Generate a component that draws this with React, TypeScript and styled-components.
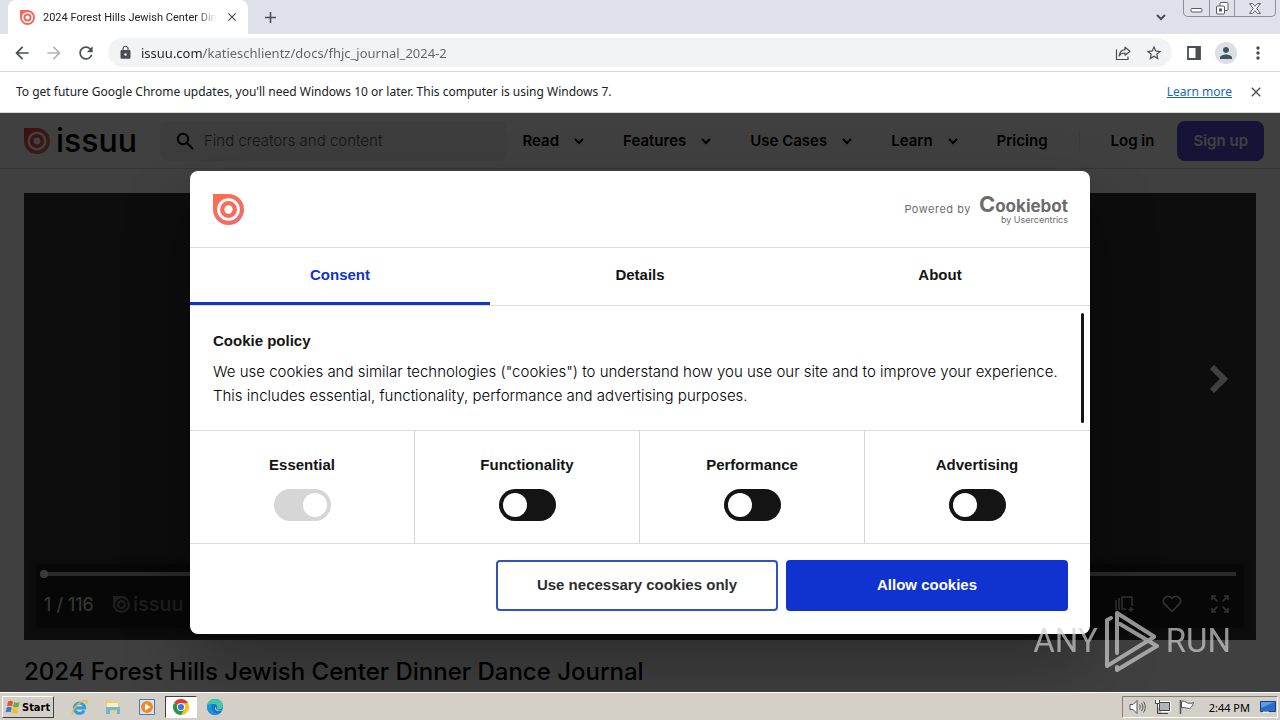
import React from "react";
import styled, { createGlobalStyle } from "styled-components";
import {
  MdAdd,
  MdArrowBack,
  MdArrowForward,
  MdClose,
  MdLock,
  MdMoreVert,
  MdPerson,
  MdRefresh,
  MdStarBorder,
} from "react-icons/md";

const uiFont = `"Noto Sans", "Open Sans", sans-serif`;
const siteFont = `Inter, "Liberation Sans", sans-serif`;
const dialogFont = `"Liberation Sans", Arial, sans-serif`;

const GlobalStyle = createGlobalStyle`
  * { box-sizing: border-box; }
  body { margin: 0; }
  button, input { font: inherit; color: inherit; margin: 0; }
  button { padding: 0; border: 0; background: none; cursor: pointer; }
  a { text-decoration: none; color: inherit; }
  h1, h2, p { margin: 0; }
  svg { display: block; flex: none; }
`;

const Screen = styled.div`
  display: flex;
  flex-direction: column;
  height: 100vh;
  overflow: hidden;
  font-family: ${uiFont};
  font-size: 12px;
  color: #202124;
`;

/* Browser chrome */

const TabStrip = styled.div`
  display: flex;
  align-items: center;
  height: 34px;
  flex: none;
  padding: 0 4px 0 8px;
  background: #dee1e9;
`;

const BrowserTab = styled.div`
  display: flex;
  align-items: center;
  align-self: stretch;
  width: 240px;
  padding: 0 9px 0 12px;
  gap: 8px;
  border-radius: 8px 8px 0 0;
  background: #fff;
`;

const TabTitle = styled.span`
  flex: 1;
  min-width: 0;
  overflow: hidden;
  white-space: nowrap;
  font-family: Roboto, ${uiFont};
  font-size: 11px;
  mask-image: linear-gradient(90deg, #000 88%, transparent);
`;

const IconButton = styled.button<{ $size?: number; $tint?: string }>`
  display: flex;
  align-items: center;
  justify-content: center;
  flex: none;
  width: ${(p) => p.$size ?? 20}px;
  height: ${(p) => p.$size ?? 20}px;
  color: ${(p) => p.$tint ?? "#4a4d51"};
`;

const NewTab = styled(IconButton)`
  margin-left: 12px;
`;

const TabSearch = styled(IconButton)`
  margin-left: auto;
  margin-right: 12px;
`;

const WindowControls = styled.div`
  display: flex;
  align-self: flex-start;
  height: 17px;
  border: 1px solid #8b8e96;
  border-top: 0;
  border-radius: 0 0 5px 5px;
`;

const WindowButton = styled.button<{ $wide?: boolean }>`
  display: flex;
  align-items: center;
  justify-content: center;
  width: ${(p) => (p.$wide ? 41 : 25)}px;
  & + & {
    border-left: 1px solid #8b8e96;
  }
`;

const Toolbar = styled.div`
  display: flex;
  align-items: center;
  height: 38px;
  flex: none;
  padding: 0 12px;
  gap: 12px;
  border-bottom: 1px solid #d5d7da;
  background: #fff;
`;

const Omnibox = styled.form`
  display: flex;
  align-items: center;
  flex: 1;
  height: 29px;
  padding: 0 8px 0 10px;
  gap: 8px;
  border-radius: 15px;
  background: #f1f3f4;
`;

const Address = styled.input`
  flex: 1;
  min-width: 0;
  padding: 0;
  border: 0;
  outline: 0;
  font-size: 13px;
  background: linear-gradient(90deg, #202124 61px, #5f6368 61px);
  background-clip: text;
  color: transparent;
`;

const Extras = styled.div`
  display: flex;
  align-items: center;
  gap: 11px;
`;

const Avatar = styled(IconButton)`
  border-radius: 50%;
  background: #dcdfe4;
`;

const InfoBar = styled.div`
  display: flex;
  align-items: center;
  height: 41px;
  flex: none;
  padding: 0 14px 1px 16px;
  gap: 14px;
  border-bottom: 1px solid #d5d9d7;
  background: #fff;
`;

const InfoText = styled.p`
  flex: 1;
`;

const InfoLink = styled.a`
  color: #1a66c4;
  text-decoration: underline;
`;

/* Web page */

const Viewport = styled.main`
  position: relative;
  flex: 1;
  min-height: 0;
  overflow: hidden;
  background: #fff;
  font-family: ${siteFont};
`;

const SiteHeader = styled.header`
  display: flex;
  align-items: center;
  height: 56px;
  padding: 0 16px 0 24px;
  border-bottom: 1px solid #d8d8d8;
  font-size: 15px;
  font-weight: 600;
  color: #000;
`;

const Brand = styled.a`
  display: flex;
  align-items: center;
  width: 136px;
  gap: 6px;
`;

const BrandName = styled.span<{ $size: number }>`
  font-size: ${(p) => p.$size}px;
  line-height: 28px;
  font-weight: 500;
`;

const SiteSearch = styled.form`
  display: flex;
  align-items: center;
  flex: 1;
  height: 40px;
  padding: 0 16px;
  gap: 10px;
  border-radius: 8px;
  background: #f2f2f2;
`;

const SearchInput = styled.input`
  flex: 1;
  min-width: 0;
  padding: 0;
  border: 0;
  outline: 0;
  background: none;
  font-weight: 300;
  &::placeholder {
    color: #5c5c5c;
    opacity: 1;
  }
`;

const SiteNav = styled.nav`
  display: flex;
  align-items: center;
  gap: 38px;
  padding: 0 31px 0 16px;
  border-right: 1px solid #ececec;
`;

const NavItem = styled.button`
  display: flex;
  align-items: center;
  gap: 14px;
`;

const LogIn = styled.a`
  padding: 0 23px 0 31px;
`;

const SignUp = styled.button`
  height: 40px;
  padding: 0 16px;
  border-radius: 8px;
  background: #5b4bd8;
  color: #fff;
`;

const Reader = styled.section`
  display: flex;
  flex-direction: column;
  height: 447px;
  margin: 24px 24px 0;
  padding: 12px;
  background: #343434;
`;

const Stage = styled.div`
  display: flex;
  align-items: center;
  justify-content: flex-end;
  flex: 1;
  padding: 0 13px 12px 0;
  color: #fff;
`;

const Controls = styled.div`
  height: 64px;
  padding: 0 8px;
  border-radius: 4px;
  background: #1c1c1c;
  box-shadow: 0 0 8px #1c1c1c;
`;

const Seek = styled.input`
  display: block;
  width: calc(100% + 8px);
  height: 20px;
  margin-left: -4px;
  appearance: none;
  background: linear-gradient(#a8a8a8, #a8a8a8) center / calc(100% - 8px) 4px no-repeat;
  &::-webkit-slider-thumb {
    appearance: none;
    width: 8px;
    height: 8px;
    border-radius: 50%;
    background: #e8e8e8;
  }
`;

const ControlRow = styled.div`
  display: flex;
  align-items: center;
  height: 40px;
  color: #e0e0e0;
`;

const PageCount = styled.span`
  width: 69px;
  font-size: 18px;
`;

const ReaderBrand = styled.div`
  display: flex;
  align-items: center;
  gap: 3px;
  flex: 1;
  color: #7a7a7a;
`;

const ReaderActions = styled.div`
  display: flex;
  gap: 24px;
  padding-right: 4px;
`;

const DocTitle = styled.h1`
  margin: 16px 24px 0;
  font-size: 24px;
  line-height: 32px;
  font-weight: 500;
  color: #000;
`;

/* Consent dialog */

const Backdrop = styled.div`
  position: absolute;
  inset: 0;
  display: flex;
  align-items: center;
  justify-content: center;
  background: rgba(0, 0, 0, 0.75);
`;

const Dialog = styled.section`
  width: 900px;
  max-width: 95%;
  border-radius: 8px;
  background: #fff;
  box-shadow: 0 32px 68px rgba(0, 0, 0, 0.3);
  font-family: ${dialogFont};
  font-size: 15px;
  color: #141414;
`;

const DialogHeader = styled.header`
  display: flex;
  align-items: center;
  justify-content: space-between;
  height: 77px;
  padding: 0 22px 0 23px;
  border-bottom: 1px solid #dcdcdc;
`;

const PoweredBy = styled.a`
  display: flex;
  align-items: center;
  gap: 8px;
  font-family: ${siteFont};
  font-size: 11px;
  letter-spacing: 0.5px;
  color: #6c6c6c;
`;

const Cookiebot = styled.span`
  display: flex;
  flex-direction: column;
  align-items: flex-end;
  letter-spacing: normal;
`;

const CookiebotName = styled.div`
  display: flex;
  align-items: baseline;
  font-size: 17px;
  line-height: 18px;
  font-weight: 700;
`;

const CookiebotInitial = styled.span`
  font-size: 22px;
  line-height: 18px;
`;

const CookiebotBy = styled.span`
  font-size: 9px;
  line-height: 9px;
`;

const TabRow = styled.div`
  display: grid;
  grid-template-columns: repeat(3, 1fr);
  height: 58px;
  border-bottom: 1px solid #dcdcdc;
`;

const DialogTab = styled.button<{ $active?: boolean }>`
  padding-bottom: 2px;
  border-bottom: 3px solid ${(p) => (p.$active ? "#1032cf" : "transparent")};
  font-weight: 700;
  color: ${(p) => (p.$active ? "#1032cf" : "#141414")};
`;

const PolicyPane = styled.div`
  display: flex;
  justify-content: space-between;
  height: 125px;
  padding: 7px 6px 7px 23px;
  border-bottom: 1px solid #dcdcdc;
`;

const PolicyText = styled.div`
  padding-top: 16px;
  line-height: 24px;
`;

const PolicyTitle = styled.h2`
  margin-bottom: 7px;
  font-size: 15px;
  line-height: 24px;
`;

const PolicyBody = styled.p`
  font-family: ${siteFont};
  font-weight: 300;
  color: #000;
`;

const ScrollThumb = styled.div`
  width: 3px;
  flex: none;
  border-radius: 2px;
  background: #141414;
`;

const Choices = styled.div`
  display: grid;
  grid-template-columns: repeat(4, 1fr);
  height: 113px;
  border-bottom: 1px solid #dcdcdc;
`;

const Choice = styled.label`
  display: flex;
  flex-direction: column;
  align-items: center;
  padding-top: 22px;
  gap: 12px;
  line-height: 24px;
  font-weight: 700;
  border-right: 1px solid #d6d6d6;
  &:last-child {
    border-right-color: transparent;
  }
`;

const Toggle = styled.input`
  appearance: none;
  display: flex;
  align-items: center;
  width: 57px;
  height: 32px;
  padding: 0 4px;
  border-radius: 16px;
  background: #141414;
  &::before {
    content: "";
    width: 24px;
    height: 24px;
    border-radius: 50%;
    background: #fff;
  }
  &:checked {
    justify-content: flex-end;
  }
  &:disabled {
    background: #d6d6d6;
  }
`;

const DialogFooter = styled.footer`
  display: flex;
  justify-content: flex-end;
  gap: 8px;
  height: 90px;
  padding: 16px 22px 23px;
`;

const ConsentButton = styled.button<{ $primary?: boolean }>`
  width: 282px;
  padding-bottom: 2px;
  border: 2px solid ${(p) => (p.$primary ? "#1032cf" : "#3450c8")};
  border-radius: 4px;
  background: ${(p) => (p.$primary ? "#1032cf" : "#fff")};
  color: ${(p) => (p.$primary ? "#fff" : "#2e2e2e")};
  font-weight: 700;
`;

/* Watermark over the recording */

const Watermark = styled.div`
  position: fixed;
  right: 49px;
  bottom: 47px;
  display: flex;
  align-items: center;
  gap: 5px;
  font-family: Roboto, sans-serif;
  font-size: 33px;
  line-height: 64px;
  color: #d0d0d0;
  opacity: 0.7;
  pointer-events: none;
`;

/* Taskbar */

const Taskbar = styled.footer`
  display: flex;
  align-items: center;
  height: 28px;
  flex: none;
  padding: 1px 2px 0;
  border-top: 1px solid #fff;
  background: #d4d0c8;
  color: #000;
`;

const StartButton = styled.button`
  display: flex;
  align-items: center;
  height: 22px;
  width: 52px;
  padding: 0 2px;
  gap: 1px;
  border: 1px solid;
  border-color: #fff #404040 #404040 #fff;
  font-family: "DejaVu Sans Condensed", ${uiFont};
  font-size: 11px;
  font-weight: 700;
`;

const Pinned = styled.div`
  display: flex;
  flex: 1;
  gap: 2px;
  padding-left: 9px;
`;

const PinnedApp = styled.button<{ $active?: boolean }>`
  display: flex;
  align-items: center;
  justify-content: center;
  width: 32px;
  height: 22px;
  border: 1px solid;
  border-color: ${(p) => (p.$active ? "#404040 #fff #fff #404040" : "transparent")};
  background: ${(p) => (p.$active ? "#fff" : "none")};
`;

const Tray = styled.div`
  display: flex;
  align-items: center;
  height: 22px;
  padding: 0 1px 0 6px;
  gap: 8px;
  border: 1px solid;
  border-color: #808080 #fff #fff #808080;
`;

const Clock = styled.time`
  padding: 0 2px 0 6px;
  font-size: 11px;
`;

/* Drawings */

function IssuuMark({ size, from, to, hole = "#fff" }: { size: number; from: string; to: string; hole?: string }) {
  const id = `mark-${size}-${from.slice(1)}`;
  return (
    <svg width={size} height={size} viewBox="0 0 30 30" aria-hidden="true">
      <defs>
        <linearGradient id={id} x1="0" y1="0" x2="1" y2="1">
          <stop offset="0" stopColor={from} />
          <stop offset="1" stopColor={to} />
        </linearGradient>
      </defs>
      <path d="M0 0h15a15 15 0 1 1-15 15z" fill={`url(#${id})`} />
      <circle cx="15" cy="15" r="9.6" fill="none" stroke={hole} strokeWidth="2.8" />
      <circle cx="15" cy="15" r="4" fill={hole} />
    </svg>
  );
}

const NavChevron = () => (
  <svg width="12" height="8" viewBox="0 0 12 8" fill="none" stroke="currentColor" strokeWidth="2">
    <path d="M2 2l4 4 4-4" />
  </svg>
);

const ShareIcon = () => (
  <svg width="16" height="16" viewBox="0 0 16 16" fill="none" stroke="currentColor" strokeWidth="1.2">
    <path d="M1.5 4.5v10h11.5v-3" />
    <path d="M10 2.2 15 6.2l-5 4V8C7.5 8 5.5 8.8 4.2 11c.4-3.4 2.5-6 5.8-6.4z" strokeLinejoin="round" />
  </svg>
);

const SidePanelIcon = () => (
  <svg width="16" height="16" viewBox="0 0 16 16">
    <path d="M2 2h12v12H2z" fill="none" stroke="currentColor" strokeWidth="1.8" />
    <path d="M9.5 2H14v12H9.5z" fill="currentColor" />
  </svg>
);

const AddToStackIcon = () => (
  <svg width="20" height="20" viewBox="0 0 20 20" fill="none" stroke="currentColor" strokeWidth="1.5">
    <path d="M2 6v10M5 4v12M12 15H8V3h10v9M14.5 15.5h5M17 13v5" />
  </svg>
);

const HeartIcon = () => (
  <svg width="20" height="20" viewBox="0 0 24 24" fill="none" stroke="currentColor" strokeWidth="2">
    <path d="M12 21 3.3 12.2a5.5 5.5 0 0 1 7.8-7.8l.9.9.9-.9a5.5 5.5 0 0 1 7.8 7.8z" strokeLinejoin="round" />
  </svg>
);

const FullscreenIcon = () => (
  <svg width="20" height="20" viewBox="0 0 20 20" fill="none" stroke="currentColor" strokeWidth="1.6">
    <path d="M2 6V2h4M14 2h4v4M18 14v4h-4M6 18H2v-4M2.500 2.500l5 5M17.500 2.500l-5 5M17.500 17.500l-5-5M2.500 17.500l5-5" />
  </svg>
);

const WatermarkLogo = () => (
  <svg width="58" height="64" viewBox="0 0 58 64" fill="none" stroke="currentColor" strokeWidth="4" strokeLinejoin="round" strokeLinecap="round">
    <path d="M14 44V4l37 23.500" />
    <path d="M8 9 4 11v46l47-29" />
    <path d="M17 15 54 37 14 61v-3" />
  </svg>
);

const WindowsFlag = () => (
  <svg width="16" height="16" viewBox="0 0 16 16">
    <path d="M3 2.500c2-1 3.500-.8 5 0L7 7.300c-1.500-.8-3-.8-5 0z" fill="#e8542a" />
    <path d="M9 3c2 1 3.700.8 5.500 0l-1 4.800c-2 .8-3.500.8-5.500 0z" fill="#6fae2e" />
    <path d="M1.700 8.500c2-1 3.500-.8 5 0l-1 4.800c-1.500-.8-3-.8-5 0z" fill="#3a79d0" />
    <path d="M7.700 9c2 1 3.700.8 5.500 0l-1 4.800c-2 .8-3.500.8-5.500 0z" fill="#f5bd22" />
  </svg>
);

const ExplorerIcon = () => (
  <svg width="17" height="17" viewBox="0 0 17 17" fill="none">
    <path d="M13.200 11.500A5.200 5.200 0 1 1 13.700 9H5" stroke="#2f9fe0" strokeWidth="3" />
    <path d="M2 15.500C-1 12.500 9 1 15.500 1.500c1.200.4.700 2-.2 3.500" stroke="#e9b93b" strokeWidth="1.4" />
  </svg>
);

const FolderIcon = () => (
  <svg width="16" height="16" viewBox="0 0 16 16">
    <path d="M1 1h5l1 2h7v11H1z" fill="#e8cf72" />
    <path d="M2 4h11v4H2z" fill="#fbf1bd" />
    <path d="M1 8h14v7h-3v-4H5v4H1z" fill="#6cb7dd" />
  </svg>
);

const PlayerIcon = () => (
  <svg width="16" height="16" viewBox="0 0 16 16">
    <path d="M.5.5h15v15H.5z" fill="#d5e5f5" stroke="#4a78b0" />
    <circle cx="8" cy="8" r="6" fill="#f08a1c" />
    <path d="M6 4.500 11.500 8 6 11.500z" fill="#fff" />
  </svg>
);

const ChromeIcon = () => (
  <svg width="16" height="16" viewBox="0 0 16 16">
    <path d="M8 8 1.070 4A8 8 0 0 1 14.930 4z" fill="#e33b2e" />
    <path d="M8 8V4h6.930A8 8 0 0 1 8 16z" fill="#fbc116" />
    <path d="M8 8l3.460 2L8 16A8 8 0 0 1 1.070 4z" fill="#279847" />
    <path d="M4.500 4h10.430L8 4.400z" fill="#e33b2e" />
    <circle cx="8" cy="8" r="4" fill="#fff" />
    <circle cx="8" cy="8" r="3.100" fill="#3b78e7" />
  </svg>
);

const EdgeIcon = () => (
  <svg width="16" height="16" viewBox="0 0 16 16">
    <circle cx="8" cy="8" r="8" fill="#1376c8" />
    <path d="M.2 7C1 2.500 4.500 0 8.500 0 13 0 16 3.200 16 6.500c0 2.500-1.800 4-4 4-1.700 0-2.600-.8-2-1.600C10.800 7 9.500 5 6.500 5 3.500 5 1 6 .2 7z" fill="#43c7a8" />
    <path d="M.1 8C1 5.500 3.500 4.500 6 5 4 7 4.500 11 7 13c2 1.600 4.500 1.500 6.500.5C9 18.500.2 15.500.1 8z" fill="#1c93dc" />
    <path d="M8.500 7.500c-1.500 2.500.5 4.800 4 4.500 1.500-.1 2.500-.6 3-1.200-1 .5-2 .7-3.500.7-2 0-3.500-1.500-3.500-4z" fill="#d4d0c8" />
  </svg>
);

const SpeakerIcon = () => (
  <svg width="17" height="16" viewBox="0 0 17 16" fill="none" stroke="#555">
    <path d="M1 5.500h3l4-4v13l-4-4H1z" fill="#fff" />
    <path d="M10.500 5.500c1 1.500 1 3.500 0 5M12.500 4c2 2.500 2 5.500 0 8M14.500 2.500c2.300 3.500 2.300 7.500 0 11" />
  </svg>
);

const NetworkIcon = () => (
  <svg width="17" height="16" viewBox="0 0 17 16" fill="none" stroke="#444">
    <path d="M5.500 3.500h10v8h-10z" fill="#b9b9b9" stroke="#fff" strokeWidth="3" />
    <path d="M5.500 3.500h10v8h-10zM8 14.500h6M3.500 7v7.500H8" fill="#b4b4b4" />
    <path d="M1.500 1v3.500h4V1M3.500 4v4" fill="#fff" />
  </svg>
);

const FlagIcon = () => (
  <svg width="16" height="16" viewBox="0 0 16 16" stroke="#555">
    <path d="M2.500 2.500c2-1 4 0 6 1.500 2 .5 4 .5 6-.5-1 3-2 5-4 6-2 .5-4-2-8-.5z" fill="#fff" />
    <path d="M1.500 1v14" strokeWidth="1.6" />
  </svg>
);

const MonitorIcon = () => (
  <svg width="16" height="16" viewBox="0 0 16 16">
    <path d="M.5 2.500h15v10H.5z" fill="#2b6cc8" stroke="#173f85" />
    <path d="M1 3h14L1 9z" fill="#5f9be6" />
    <path d="M3 12.500h6v1.500H3z" fill="#eee" />
  </svg>
);

const navItems = ["Read", "Features", "Use Cases", "Learn"];

const choices = [
  { name: "Essential", locked: true },
  { name: "Functionality" },
  { name: "Performance" },
  { name: "Advertising" },
];

export default function App() {
  return (
    <Screen>
      <GlobalStyle />
      <TabStrip>
        <BrowserTab>
          <IssuuMark size={15} from="#f26a5c" to="#e66a62" />
          <TabTitle>2024 Forest Hills Jewish Center Dinner</TabTitle>
          <IconButton $size={14} aria-label="Close tab">
            <MdClose size={14} />
          </IconButton>
        </BrowserTab>
        <NewTab aria-label="New tab">
          <MdAdd size={19} />
        </NewTab>
        <TabSearch aria-label="Search tabs">
          <NavChevron />
        </TabSearch>
        <WindowControls>
          <WindowButton aria-label="Minimize">
            <svg width="13" height="16" viewBox="0 0 13 16">
              <rect x="1" y="8.5" width="11" height="3.5" rx="1" fill="#fff" stroke="#555b66" />
            </svg>
          </WindowButton>
          <WindowButton aria-label="Restore">
            <svg width="13" height="13" viewBox="0 0 13 13" fill="#fff" stroke="#555b66">
              <rect x="4" y=".5" width="8" height="8" rx="1" />
              <rect x=".5" y="4" width="8" height="8" rx="1" />
              <rect x="3.5" y="7" width="2" height="2" />
            </svg>
          </WindowButton>
          <WindowButton $wide aria-label="Close">
            <svg width="12" height="11" viewBox="0 0 12 11" fill="#fff" stroke="#555b66">
              <path d="M.6.6h3L6 3.400 8.400.6h3L7.800 5.500l3.600 4.900h-3L6 7.600l-2.400 2.800h-3l3.600-4.900z" strokeLinejoin="round" />
            </svg>
          </WindowButton>
        </WindowControls>
      </TabStrip>

      <Toolbar>
        <IconButton aria-label="Back">
          <MdArrowBack size={20} />
        </IconButton>
        <IconButton $tint="#b4b6b9" aria-label="Forward">
          <MdArrowForward size={20} />
        </IconButton>
        <IconButton aria-label="Reload">
          <MdRefresh size={20} />
        </IconButton>
        <Omnibox>
          <MdLock size={15} color="#4a4d51" />
          <Address aria-label="Address" defaultValue="issuu.com/katieschlientz/docs/fhjc_journal_2024-2" />
          <Extras>
            <IconButton type="button" aria-label="Share">
              <ShareIcon />
            </IconButton>
            <IconButton type="button" aria-label="Bookmark">
              <MdStarBorder size={18} />
            </IconButton>
          </Extras>
        </Omnibox>
        <Extras>
          <IconButton aria-label="Side panel">
            <SidePanelIcon />
          </IconButton>
          <Avatar $size={22} $tint="#45506a" aria-label="Profile">
            <MdPerson size={18} />
          </Avatar>
          <IconButton aria-label="Menu">
            <MdMoreVert size={20} />
          </IconButton>
        </Extras>
      </Toolbar>

      <InfoBar>
        <InfoText>
          To get future Google Chrome updates, you'll need Windows 10 or later. This computer is using Windows 7.
        </InfoText>
        <InfoLink href="#learn">Learn more</InfoLink>
        <IconButton aria-label="Dismiss">
          <MdClose size={16} />
        </IconButton>
      </InfoBar>

      <Viewport>
        <SiteHeader>
          <Brand href="#home">
            <IssuuMark size={26} from="#e8403c" to="#f07068" />
            <BrandName $size={32}>issuu</BrandName>
          </Brand>
          <SiteSearch role="search">
            <svg width="18" height="18" viewBox="0 0 18 18" fill="none" stroke="#000" strokeWidth="2">
              <circle cx="7" cy="7" r="5.2" />
              <path d="m11 11 6 6" />
            </svg>
            <SearchInput aria-label="Find creators and content" placeholder="Find creators and content" />
          </SiteSearch>
          <SiteNav>
            {navItems.map((item) => (
              <NavItem key={item}>
                {item}
                <NavChevron />
              </NavItem>
            ))}
            <a href="#pricing">Pricing</a>
          </SiteNav>
          <LogIn href="#login">Log in</LogIn>
          <SignUp>Sign up</SignUp>
        </SiteHeader>

        <Reader>
          <Stage>
            <IconButton $size={24} $tint="#fff" aria-label="Next page">
              <svg width="20" height="30" viewBox="0 0 20 30" fill="none" stroke="currentColor" strokeWidth="6">
                <path d="m3 3 12 12L3 27" />
              </svg>
            </IconButton>
          </Stage>
          <Controls>
            <Seek type="range" min={1} max={116} defaultValue={1} aria-label="Page" />
            <ControlRow>
              <PageCount>1 / 116</PageCount>
              <ReaderBrand>
                <IssuuMark size={17} from="#7a7a7a" to="#7a7a7a" hole="#1c1c1c" />
                <BrandName $size={20}>issuu</BrandName>
              </ReaderBrand>
              <ReaderActions>
                <IconButton $size={24} $tint="#c8c8c8" aria-label="Add to stack">
                  <AddToStackIcon />
                </IconButton>
                <IconButton $size={24} $tint="#c8c8c8" aria-label="Like">
                  <HeartIcon />
                </IconButton>
                <IconButton $size={24} $tint="#c8c8c8" aria-label="Fullscreen">
                  <FullscreenIcon />
                </IconButton>
              </ReaderActions>
            </ControlRow>
          </Controls>
        </Reader>
        <DocTitle>2024 Forest Hills Jewish Center Dinner Dance Journal</DocTitle>

        <Backdrop>
          <Dialog role="dialog" aria-label="Cookie consent">
            <DialogHeader>
              <IssuuMark size={31} from="#ff6f4e" to="#ec6a70" />
              <PoweredBy href="#cookiebot">
                Powered by
                <Cookiebot>
                  <CookiebotName>
                    <CookiebotInitial>C</CookiebotInitial>ookiebot
                  </CookiebotName>
                  <CookiebotBy>by Usercentrics</CookiebotBy>
                </Cookiebot>
              </PoweredBy>
            </DialogHeader>
            <TabRow role="tablist">
              <DialogTab role="tab" aria-selected $active>
                Consent
              </DialogTab>
              <DialogTab role="tab">Details</DialogTab>
              <DialogTab role="tab">About</DialogTab>
            </TabRow>
            <PolicyPane>
              <PolicyText>
                <PolicyTitle>Cookie policy</PolicyTitle>
                <PolicyBody>
                  We use cookies and similar technologies ("cookies") to understand how you use our site and to improve
                  your experience. This includes essential, functionality, performance and advertising purposes.
                </PolicyBody>
              </PolicyText>
              <ScrollThumb />
            </PolicyPane>
            <Choices>
              {choices.map((choice) => (
                <Choice key={choice.name}>
                  {choice.name}
                  <Toggle type="checkbox" role="switch" defaultChecked={choice.locked} disabled={choice.locked} />
                </Choice>
              ))}
            </Choices>
            <DialogFooter>
              <ConsentButton>Use necessary cookies only</ConsentButton>
              <ConsentButton $primary>Allow cookies</ConsentButton>
            </DialogFooter>
          </Dialog>
        </Backdrop>
      </Viewport>

      <Taskbar>
        <StartButton>
          <WindowsFlag />
          Start
        </StartButton>
        <Pinned>
          <PinnedApp aria-label="Internet Explorer">
            <ExplorerIcon />
          </PinnedApp>
          <PinnedApp aria-label="Files">
            <FolderIcon />
          </PinnedApp>
          <PinnedApp aria-label="Media Player">
            <PlayerIcon />
          </PinnedApp>
          <PinnedApp $active aria-label="Chrome">
            <ChromeIcon />
          </PinnedApp>
          <PinnedApp aria-label="Edge">
            <EdgeIcon />
          </PinnedApp>
        </Pinned>
        <Tray>
          <SpeakerIcon />
          <NetworkIcon />
          <FlagIcon />
          <Clock>2:44 PM</Clock>
          <MonitorIcon />
        </Tray>
      </Taskbar>

      <Watermark>
        ANY
        <WatermarkLogo />
        RUN
      </Watermark>
    </Screen>
  );
}
